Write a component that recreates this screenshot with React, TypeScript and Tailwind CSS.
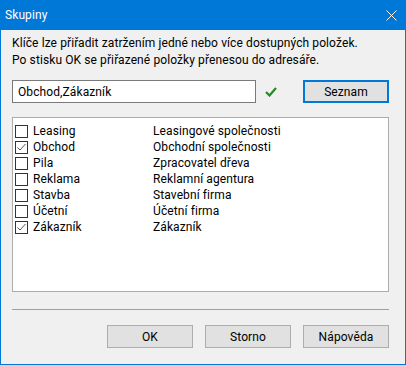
const items = [
  { key: "Leasing", desc: "Leasingové společnosti", checked: false },
  { key: "Obchod", desc: "Obchodní společnosti", checked: true },
  { key: "Pila", desc: "Zpracovatel dřeva", checked: false },
  { key: "Reklama", desc: "Reklamní agentura", checked: false },
  { key: "Stavba", desc: "Stavební firma", checked: false },
  { key: "Účetní", desc: "Účetní firma", checked: false },
  { key: "Zákazník", desc: "Zákazník", checked: true },
];

const CheckBox = ({ checked }: { checked: boolean }) => (
  <div className="w-[13px] h-[13px] border border-[#333333] bg-white flex items-center justify-center shrink-0">
    {checked && (
      <svg width="11" height="11" viewBox="0 0 11 11">
        <polyline points="1.5,5.5 4,8 9.5,2" fill="none" stroke="#555555" strokeWidth="1" />
      </svg>
    )}
  </div>
);

const DlgButton = ({ label }: { label: string }) => (
  <button className="w-[86px] h-[23px] border border-[#adadad] bg-[#e1e1e1] text-black text-[12px] tracking-[0.1px]">
    {label}
  </button>
);

export default function App() {
  return (
    <div
      className="w-[406px] h-[365px] flex flex-col bg-[#f0f0f0] border-x border-b border-[#0078d7] text-black text-[12px] tracking-[0.1px] overflow-hidden"
      style={{ fontFamily: 'Roboto, sans-serif' }}
    >
      <div className="h-[30px] bg-[#0078d7] flex items-center justify-between pl-[5px] pr-[9px] text-white shrink-0 -mx-px">
        <span className="text-[12px]">Skupiny</span>
        <svg width="11" height="11" viewBox="0 0 11 11">
          <path d="M0.5 0.5 L10.5 10.5 M10.5 0.5 L0.5 10.5" stroke="white" strokeWidth="1" />
        </svg>
      </div>

      <div className="flex flex-col pl-[11px] pr-[16px] pt-[5px]">
        <div className="leading-[17px]">
          <p>Klíče lze přiřadit zatržením jedné nebo více dostupných položek.</p>
          <p>Po stisku OK se přiřazené položky přenesou do adresáře.</p>
        </div>

        <div className="flex items-center mt-[11px] h-[23px]">
          <div className="w-[244px] h-[23px] border border-[#7a7a7a] bg-white flex items-center pl-[5px]">
            Obchod,Zákazník
          </div>
          <svg className="ml-[9px]" width="12" height="10" viewBox="0 0 12 10">
            <path d="M1 5 L4.5 8.5 L11 1" fill="none" stroke="#1e8f1e" strokeWidth="2.2" />
          </svg>
          <button className="ml-auto w-[86px] h-[23px] border-2 border-[#0078d7] bg-[#e1e1e1] text-[12px] tracking-[0.1px]">
            Seznam
          </button>
        </div>

        <div className="mt-[14px] h-[175px] border border-[#adadad] bg-white pt-[5px] pl-[2px]">
          {items.map((it) => (
            <div key={it.key} className="h-[16px] flex items-center">
              <CheckBox checked={it.checked} />
              <span className="ml-[5px] w-[120px]">{it.key}</span>
              <span>{it.desc}</span>
            </div>
          ))}
        </div>

        <div className="mt-[17px] h-px bg-[#a0a0a0]" />

        <div className="flex justify-end gap-[12px] mt-[15px]">
          <DlgButton label="OK" />
          <DlgButton label="Storno" />
          <DlgButton label="Nápověda" />
        </div>
      </div>
    </div>
  );
}
